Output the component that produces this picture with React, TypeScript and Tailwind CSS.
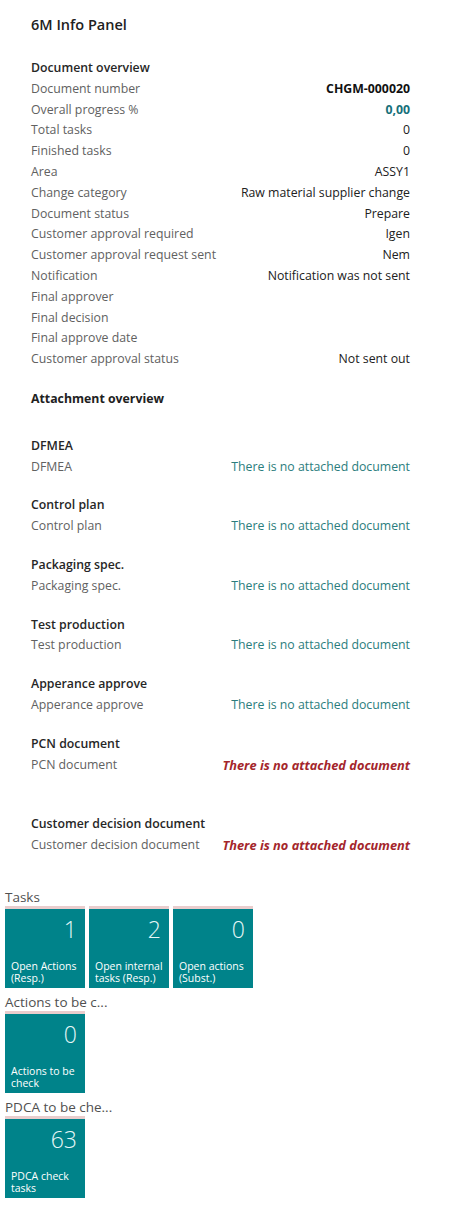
import React from 'react';

interface FieldRow {
  label: string;
  value?: string;
  tone?: 'strong' | 'accent';
}

interface AttachmentGroup {
  title: string;
  missing?: 'soft' | 'hard';
  spaced?: boolean;
}

interface Tile {
  count: number;
  caption: string[];
}

const overview: FieldRow[] = [
  { label: 'Document number', value: 'CHGM-000020', tone: 'strong' },
  { label: 'Overall progress %', value: '0,00', tone: 'accent' },
  { label: 'Total tasks', value: '0' },
  { label: 'Finished tasks', value: '0' },
  { label: 'Area', value: 'ASSY1' },
  { label: 'Change category', value: 'Raw material supplier change' },
  { label: 'Document status', value: 'Prepare' },
  { label: 'Customer approval required', value: 'Igen' },
  { label: 'Customer approval request sent', value: 'Nem' },
  { label: 'Notification', value: 'Notification was not sent' },
  { label: 'Final approver' },
  { label: 'Final decision' },
  { label: 'Final approve date' },
  { label: 'Customer approval status', value: 'Not sent out' },
];

const attachments: AttachmentGroup[] = [
  { title: 'DFMEA' },
  { title: 'Control plan' },
  { title: 'Packaging spec.' },
  { title: 'Test production' },
  { title: 'Apperance approve' },
  { title: 'PCN document', missing: 'hard' },
  { title: 'Customer decision document', missing: 'hard', spaced: true },
];

const cueGroups: { name: string; tiles: Tile[] }[] = [
  {
    name: 'Tasks',
    tiles: [
      { count: 1, caption: ['Open Actions', '(Resp.)'] },
      { count: 2, caption: ['Open internal', 'tasks (Resp.)'] },
      { count: 0, caption: ['Open actions', '(Subst.)'] },
    ],
  },
  { name: 'Actions to be c...', tiles: [{ count: 0, caption: ['Actions to be', 'check'] }] },
  { name: 'PDCA to be che...', tiles: [{ count: 63, caption: ['PDCA check', 'tasks'] }] },
];

const CueTile: React.FC<{ tile: Tile }> = ({ tile }) => (
  <div className="w-[80px] border-t-[3px] border-[#e9cdcd] bg-[#00838a] text-white">
    <div className="flex h-[79px] flex-col justify-between px-[6px] pt-[6px] pb-[4px]">
      <div className="pr-[2px] text-right text-[23px] font-light leading-[28px] text-[#e6f7f7]">
        {tile.count}
      </div>
      <div className="text-[10.5px] leading-[12px]">
        {tile.caption.map((line) => (
          <div key={line} className="whitespace-nowrap">
            {line}
          </div>
        ))}
      </div>
    </div>
  </div>
);

export default function App() {
  return (
    <div
      className="min-h-[1205px] w-[456px] bg-white text-[12.3px] leading-[20.8px] text-[#212121]"
      style={{ fontFamily: '"Open Sans", "Noto Sans", sans-serif' }}
    >
      <div className="pr-[46px] pl-[31px] pt-[14px]">
        <h1 className="text-[14.5px] font-semibold leading-[22px] text-[#212121]">6M Info Panel</h1>

        {/* Document overview */}
        <div className="mt-[22px]">
          <div className="font-semibold text-[#262626]">Document overview</div>
          {overview.map((row) => (
            <div key={row.label} className="flex justify-between gap-2 whitespace-nowrap">
              <span className="text-[#616161]">{row.label}</span>
              {row.value ? (
                <span
                  className={
                    row.tone === 'strong'
                      ? 'font-bold text-[#111]'
                      : row.tone === 'accent'
                        ? 'font-bold text-[#17707a]'
                        : 'text-[#212121]'
                  }
                >
                  {row.value}
                </span>
              ) : null}
            </div>
          ))}
        </div>

        {/* Attachment overview */}
        <div className="mt-[19px] font-bold">Attachment overview</div>
        <div className="mt-[26px]">
          {attachments.map((group) => (
            <div key={group.title} className={group.spaced ? 'mt-[39px]' : 'mt-[18px] first:mt-0'}>
              <div className="font-semibold text-[#262626]">{group.title}</div>
              <div className="flex justify-between gap-2 whitespace-nowrap">
                <span className="text-[#616161]">{group.title}</span>
                {group.missing === 'hard' ? (
                  <span className="text-[12.8px] font-bold italic text-[#a4262c]">
                    There is no attached document
                  </span>
                ) : (
                  <span className="text-[#2b7d7d]">There is no attached document</span>
                )}
              </div>
            </div>
          ))}
        </div>
      </div>

      {/* Cue tiles */}
      <div className="mt-[32px] pl-[5px]">
        {cueGroups.map((group) => (
          <div key={group.name} className="mb-[5px]">
            <div className="text-[13.5px] leading-[18px] text-[#505050]">{group.name}</div>
            <div className="flex gap-[4px]">
              {group.tiles.map((tile) => (
                <CueTile key={tile.caption.join(' ')} tile={tile} />
              ))}
            </div>
          </div>
        ))}
      </div>
    </div>
  );
}
